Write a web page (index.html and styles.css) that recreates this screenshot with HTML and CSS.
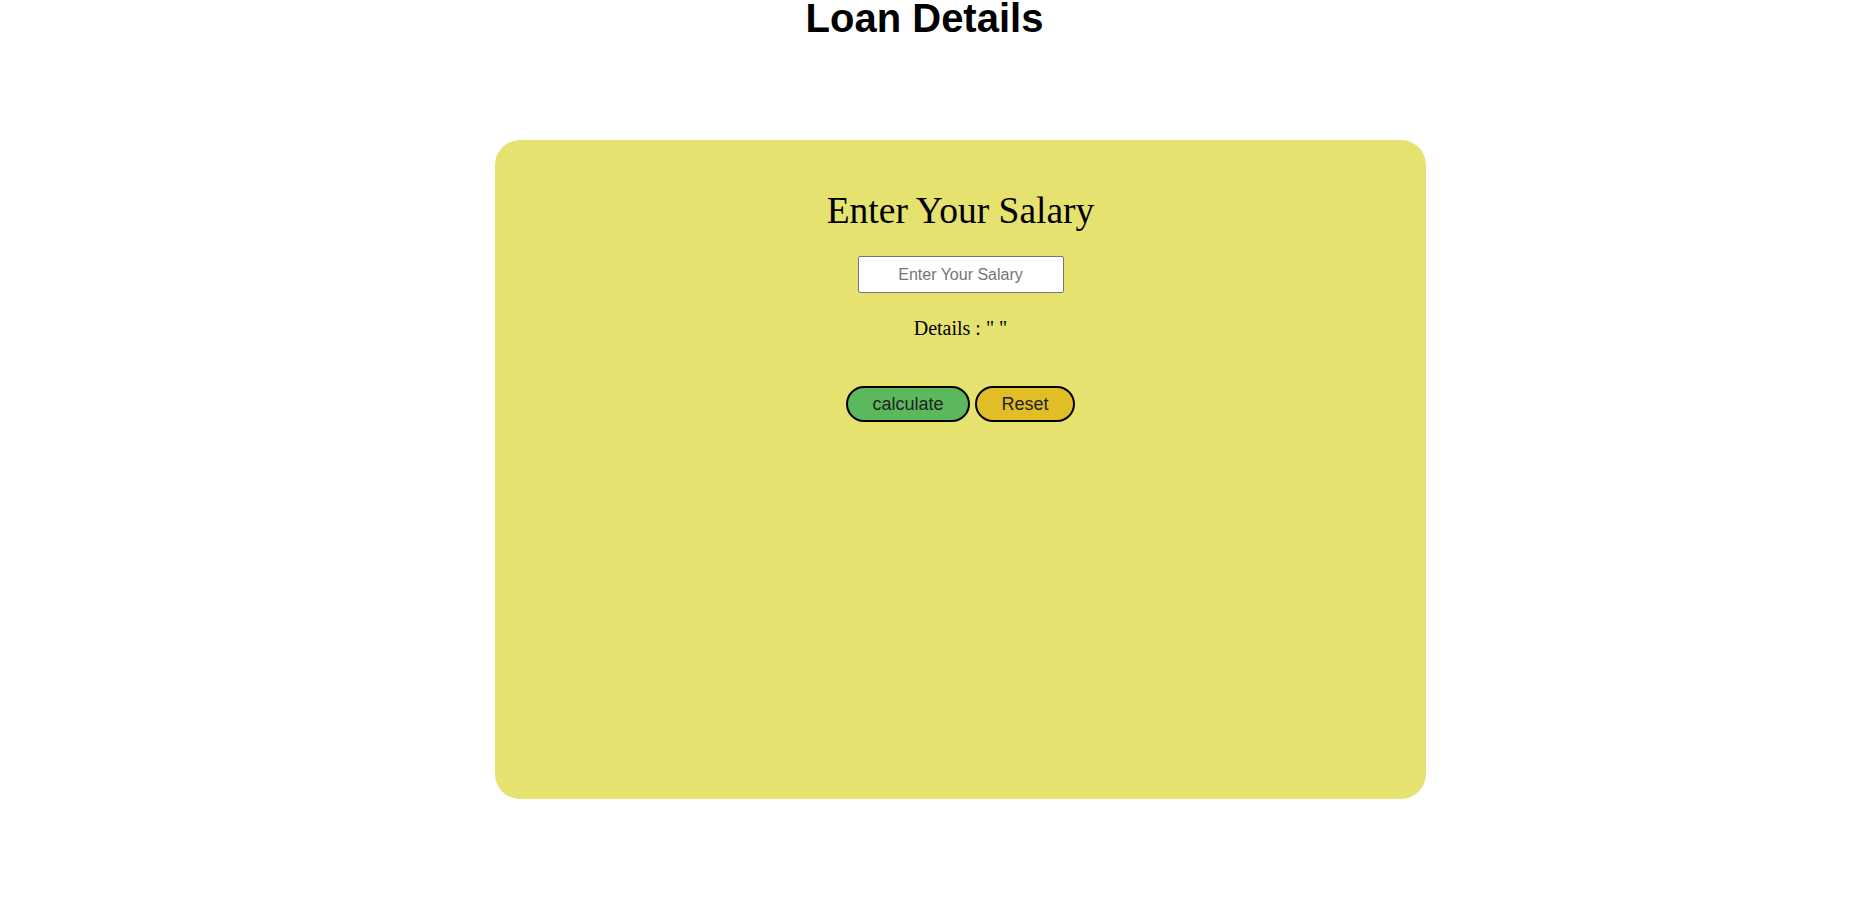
FILE: index.html
```html
<!DOCTYPE html>
<html>
<head>
<meta charset="utf-8">
<title>Loan Details</title>
<link rel="stylesheet" href="styles.css">
</head>
<body>
<h1 class="page-title">Loan Details</h1>
<main class="card">
  <h2 class="card-title">Enter Your Salary</h2>
  <input class="salary-input" type="text" placeholder="Enter Your Salary">
  <p class="details">Details : " "</p>
  <div class="actions">
    <button class="btn btn-calc">calculate</button>
    <button class="btn btn-reset">Reset</button>
  </div>
</main>
</body>
</html>
```

FILE: styles.css
```css
html, body {
  margin: 0;
  padding: 0;
  background: #ffffff;
}

body {
  font-family: "Liberation Serif", "Times New Roman", serif;
  color: #000;
}

.page-title {
  margin: 0;
  font-family: "Liberation Sans", Arial, sans-serif;
  font-size: 40px;
  font-weight: bold;
  line-height: 37px;
  text-align: center;
}

.card {
  box-sizing: border-box;
  width: 931px;
  height: 659px;
  margin: 103px 0 0 495px;
  padding-top: 51px;
  background: #e5e270;
  border-radius: 25px;
  display: flex;
  flex-direction: column;
  align-items: center;
}

.card-title {
  margin: 0;
  font-family: "Liberation Serif", "Times New Roman", serif;
  font-weight: normal;
  font-size: 37.5px;
  line-height: 40px;
}

.salary-input {
  box-sizing: border-box;
  width: 206px;
  height: 37px;
  margin-top: 25px;
  border: 1px solid #767676;
  border-radius: 2px;
  background: #fff;
  font-family: "Liberation Sans", Arial, sans-serif;
  font-size: 16px;
  text-align: center;
  padding: 0 6px;
  outline: none;
}

.salary-input::placeholder {
  color: #757575;
}

.details {
  margin: 24px 0 0;
  font-size: 20px;
  line-height: 23px;
}

.actions {
  margin-top: 46px;
  display: flex;
  gap: 5px;
}

.btn {
  box-sizing: border-box;
  height: 36px;
  padding: 0 24px;
  border: 2px solid #000;
  border-radius: 18px;
  font-family: "Liberation Sans", Arial, sans-serif;
  font-size: 18px;
  color: #222;
  cursor: pointer;
}

.btn-calc {
  width: 124px;
  background: #5cb85c;
}

.btn-reset {
  width: 100px;
  background: #e1be25;
}
```
